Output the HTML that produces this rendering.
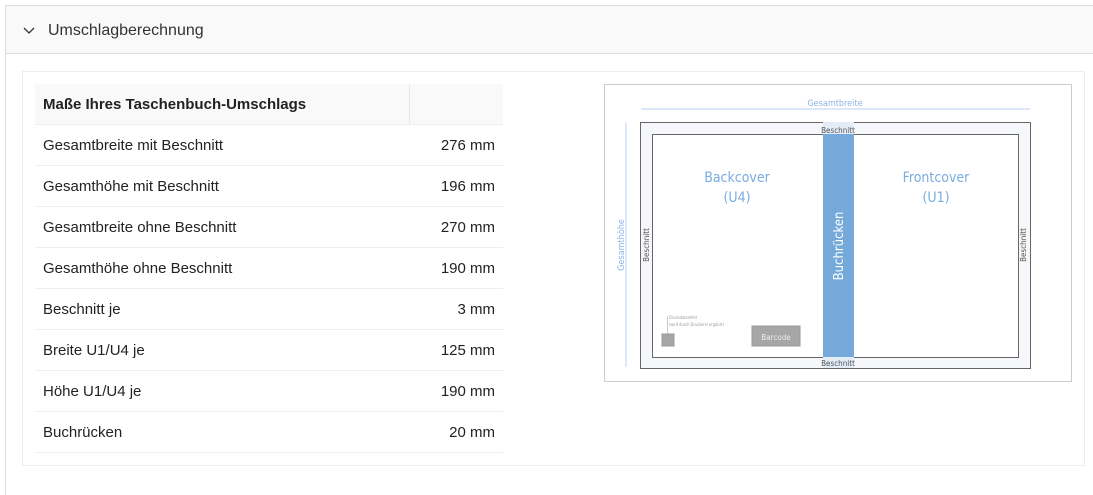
<!DOCTYPE html>
<html><head><meta charset="utf-8"><style>
*{margin:0;padding:0;box-sizing:border-box}
body{width:1093px;height:481px;background:#fff;font-family:"Liberation Sans",Arial,sans-serif;color:#222;position:relative;overflow:hidden}
.outer{position:absolute;left:5px;top:5px;width:1100px;height:490px;border-left:1px solid #ddd;border-top:1px solid #ddd}
.hdr{position:absolute;left:6px;top:6px;width:1087px;height:48px;background:#f9f9f9;border-bottom:1px solid #ddd}
.hdr span{position:absolute;left:42px;top:16px;font-size:16px;color:#333}
.hdr svg{position:absolute;left:17px;top:21px}
.panel{position:absolute;left:22px;top:71px;width:1063px;height:395px;border:1px solid #eee}
table{position:absolute;left:35px;top:84px;width:468px;border-collapse:collapse;font-size:15px}
td{height:41px;border-bottom:1px solid #eee;padding:2px 8px 0}
td.r{text-align:right}
tr.h td{background:#f9f9f9;font-weight:bold;height:40px;border-bottom:1px solid #eee}
.img{position:absolute;left:604px;top:84px;width:468px;height:298px;border:1px solid #ccc}
</style></head><body>
<div class="outer"></div>
<div class="hdr"><svg width="12" height="8" viewBox="0 0 12 8"><path d="M1 1 L6 6 L11 1" fill="none" stroke="#333" stroke-width="1.3"/></svg><span>Umschlagberechnung</span></div>
<div class="panel"></div>
<table>
<tr class="h"><td style="border-right:0">Maße Ihres Taschenbuch-Umschlags</td><td style="width:94px;border-left:1px solid #e6e6e6"></td></tr>
<tr><td>Gesamtbreite mit Beschnitt</td><td class="r">276 mm</td></tr>
<tr><td>Gesamthöhe mit Beschnitt</td><td class="r">196 mm</td></tr>
<tr><td>Gesamtbreite ohne Beschnitt</td><td class="r">270 mm</td></tr>
<tr><td>Gesamthöhe ohne Beschnitt</td><td class="r">190 mm</td></tr>
<tr><td>Beschnitt je</td><td class="r">3 mm</td></tr>
<tr><td>Breite U1/U4 je</td><td class="r">125 mm</td></tr>
<tr><td>Höhe U1/U4 je</td><td class="r">190 mm</td></tr>
<tr><td>Buchrücken</td><td class="r">20 mm</td></tr>
</table>
<div class="img"></div>
<svg style="position:absolute;left:0;top:0" width="1093" height="481" font-family="DejaVu Sans Condensed, Liberation Sans, sans-serif" font-weight="200">
<line x1="641" y1="109" x2="1030" y2="109" stroke="#b8d1ef" stroke-width="1"/>
<text x="835" y="106" font-size="9" fill="#8ab4e6" text-anchor="middle">Gesamtbreite</text>
<line x1="626" y1="123" x2="626" y2="367" stroke="#b8d1ef" stroke-width="1"/>
<text transform="translate(624,245) rotate(-90)" font-size="9" fill="#8ab4e6" text-anchor="middle">Gesamthöhe</text>
<rect x="640.5" y="122.5" width="390" height="246" fill="#f5f7fa" stroke="#666"/>
<rect x="652.5" y="134.5" width="366" height="223" fill="#fff" stroke="#666"/>
<rect x="823" y="122" width="31" height="246" fill="#e3ecf7"/>
<rect x="823" y="134" width="31" height="223" fill="#74a9da"/>
<text x="838" y="133" font-size="8" fill="#555" text-anchor="middle">Beschnitt</text>
<text x="838" y="366" font-size="8" fill="#555" text-anchor="middle">Beschnitt</text>
<text transform="translate(649,245) rotate(-90)" font-size="8" fill="#555" text-anchor="middle">Beschnitt</text>
<text transform="translate(1026,245) rotate(-90)" font-size="8" fill="#555" text-anchor="middle">Beschnitt</text>
<text transform="translate(843,246) rotate(-90)" font-size="13" fill="#fff" text-anchor="middle">Buchrücken</text>
<text x="737" y="182" font-size="14" fill="#7aace0" text-anchor="middle">Backcover</text>
<text x="737" y="202" font-size="14" fill="#7aace0" text-anchor="middle">(U4)</text>
<text x="936" y="182" font-size="14" fill="#7aace0" text-anchor="middle">Frontcover</text>
<text x="936" y="202" font-size="14" fill="#7aace0" text-anchor="middle">(U1)</text>
<rect x="752" y="326" width="48" height="20" fill="#a6a6a6" stroke="#999"/>
<text x="776" y="340" font-size="8" fill="#eee" text-anchor="middle">Barcode</text>
<line x1="667.5" y1="316" x2="667.5" y2="334" stroke="#ccc"/>
<rect x="662" y="334" width="12" height="12" fill="#a6a6a6" stroke="#999"/>
<text x="669" y="319" font-size="4" fill="#999">Druckdatenfeld</text>
<text x="669" y="326" font-size="4" fill="#999">(wird durch Druckerei ergänzt)</text>
</svg>
</body></html>
